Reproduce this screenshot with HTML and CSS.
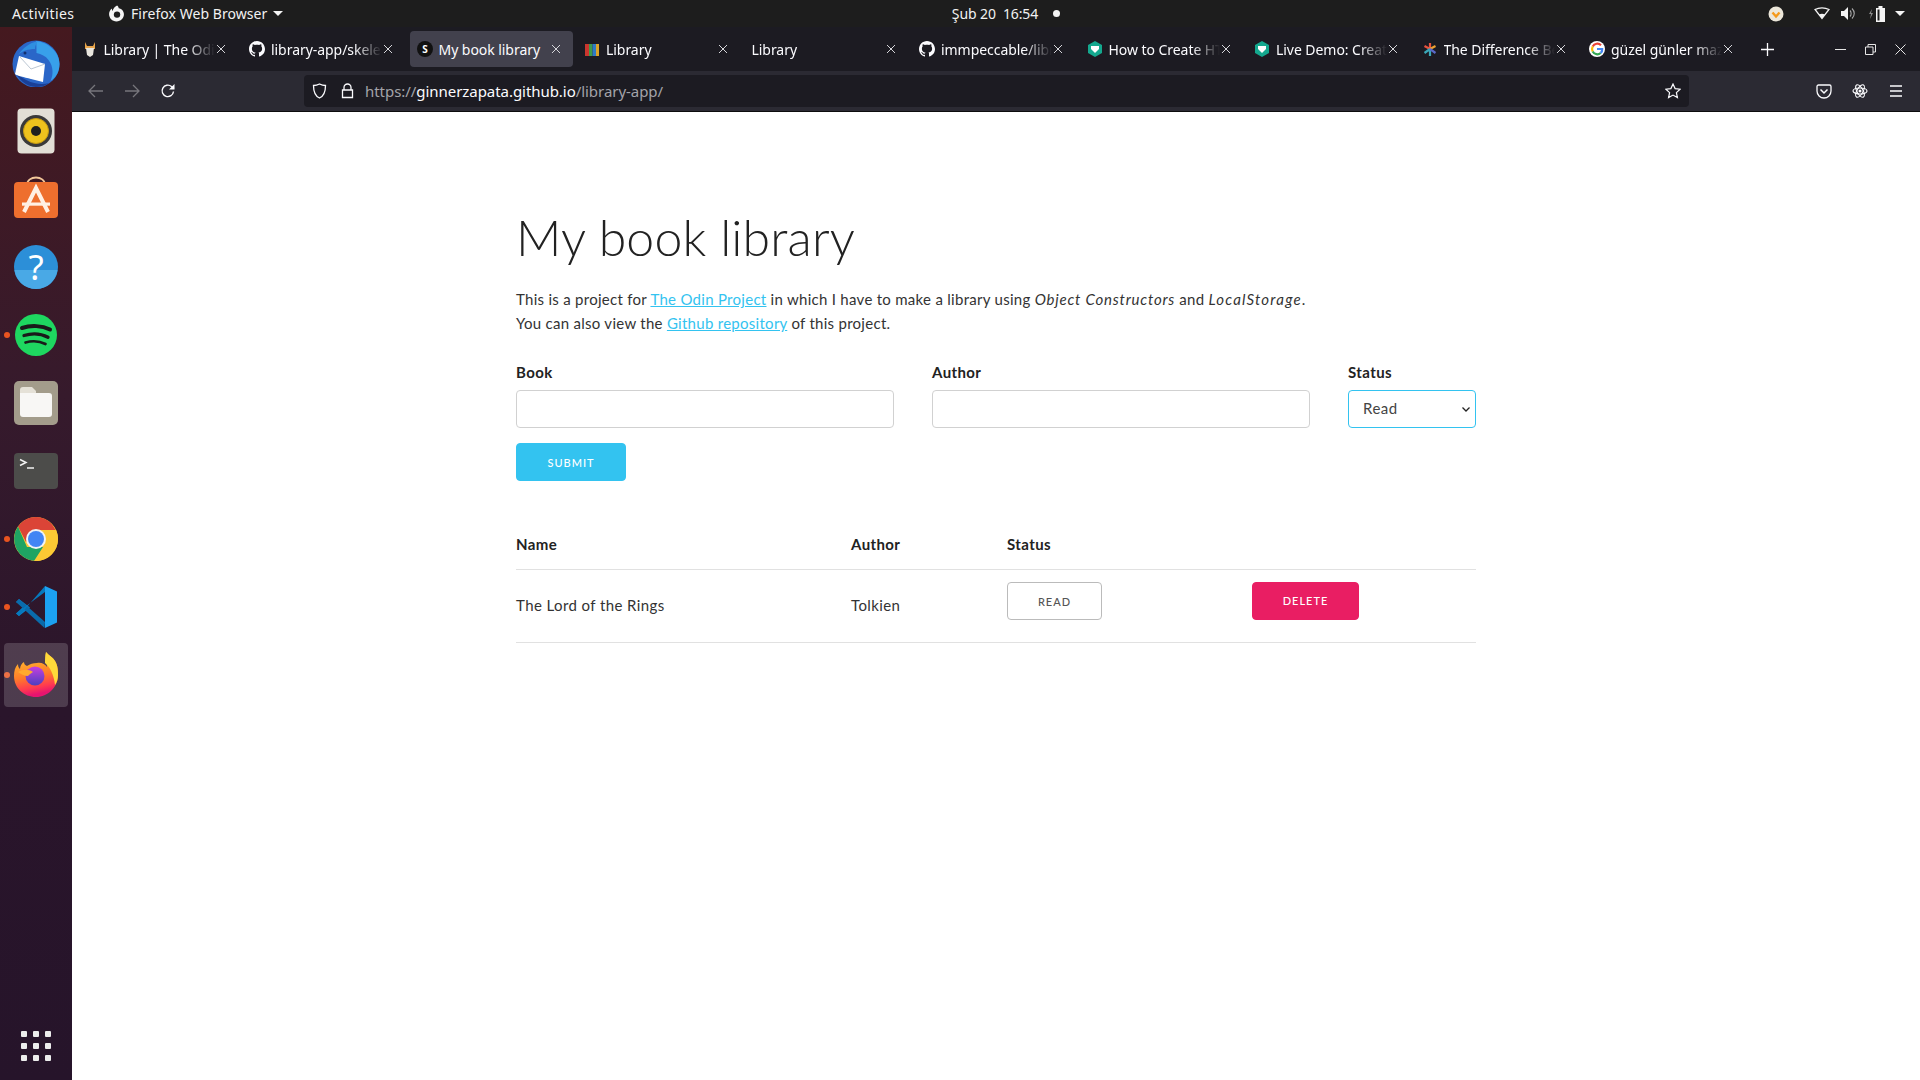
FILE: index.html
```html
<!DOCTYPE html>
<html lang="en">
<head>
<meta charset="utf-8">
<title>My book library</title>
<link rel="stylesheet" href="styles.css">
</head>
<body>
<svg class="defs" width="0" height="0" aria-hidden="true">
  <symbol id="gh" viewBox="0 0 16 16"><path fill="#fbfbfe" d="M8 0C3.600 0 0 3.600 0 8c0 3.500 2.300 6.500 5.500 7.600.4.100.5-.2.5-.4v-1.400c-2.200.5-2.700-1.100-2.700-1.100-.4-.9-.9-1.200-.9-1.200-.7-.5.100-.5.100-.5.800.100 1.200.8 1.200.8.700 1.200 1.900.9 2.300.7.100-.5.3-.9.5-1.100-1.800-.2-3.600-.9-3.600-4 0-.9.300-1.600.8-2.100-.1-.2-.4-1 .1-2.100 0 0 .7-.2 2.200.8.600-.2 1.300-.3 2-.3s1.400.1 2 .3c1.500-1 2.200-.8 2.200-.8.4 1.100.2 1.900.1 2.100.5.600.8 1.300.8 2.100 0 3.100-1.900 3.700-3.600 3.900.3.3.5.7.5 1.500v2.200c0 .2.100.5.6.4C13.700 14.500 16 11.500 16 8c0-4.400-3.600-8-8-8z"/></symbol>
  <symbol id="hex" viewBox="0 0 16 16"><path fill="#14a88e" d="M8 0l7 4v8l-7 4-7-4V4z"/><path fill="#fff" d="M4 5h8v3L8 12 4 8z"/></symbol>
  <symbol id="x" viewBox="0 0 10 10"><path stroke="#d6d6da" stroke-width="1" fill="none" d="M1 1l8 8M9 1l-8 8"/></symbol>
</svg>

<header class="topbar">
  <div class="top-left">
    <span class="top-activities">Activities</span>
    <span class="top-app">
      <svg class="top-ff" width="17" height="17" viewBox="0 0 16 16"><path fill="#f4f4f4" d="M8.500 .5c1 .7 1.500 1.500 1.600 2.500C13 3.500 15 5.800 15 8.800 15 12.500 12 15.500 8 15.500S1 12.300 1 8.500C1 6.300 2 4.300 3.800 3.200 3.600 4.200 3.800 5 4.300 5.700 4.700 3.700 6.500 1.500 8.500 .5z"/><circle cx="8.500" cy="9" r="3" fill="#1d1d1d"/></svg>
      Firefox Web Browser
      <svg class="caret" width="10" height="5" viewBox="0 0 10 5"><path fill="#f4f4f4" d="M0 0h10L5 5z"/></svg>
    </span>
  </div>
  <div class="top-center">
    <span class="top-date">Şub 20&nbsp; 16:54</span>
    <span class="top-dot"></span>
  </div>
  <div class="top-right">
    <svg class="tray-orange" width="16" height="16" viewBox="0 0 16 16"><circle cx="8" cy="8" r="7.500" fill="#ece7da"/><path d="M4.500 6.500L8 10.500l3.500-4" fill="none" stroke="#f59a1c" stroke-width="2.400"/></svg>
    <svg class="tray-wifi" width="16" height="13" viewBox="0 0 16 13"><path fill="none" stroke="#f4f4f4" stroke-width="1.300" d="M1 2.500C5 .3 11 .3 15 2.500L8 11.500z"/><path fill="#f4f4f4" d="M5 7.500c2-1 4-1 6 0L8 11.500z"/></svg>
    <svg class="tray-vol" width="15" height="13" viewBox="0 0 15 13"><path fill="#f4f4f4" d="M0 4h3l4-4v13l-4-4H0z"/><path fill="none" stroke="#a8a8a8" stroke-width="1.100" d="M9 3.500c1.500 1.500 1.500 4.500 0 6M11 1.500c3 3 3 7 0 10"/></svg>
    <svg class="tray-bat" width="18" height="16" viewBox="0 0 18 16"><path fill="#8a8a8a" d="M3 3L0 8h2l-1 5 3-6H2z"/><rect x="7.500" y="2.500" width="8" height="13" fill="#f4f4f4" stroke="#f4f4f4"/><rect x="9.500" y="0" width="4" height="2" fill="#f4f4f4"/><rect x="8.500" y="3.500" width="2" height="11" fill="#1d1d1d"/></svg>
    <svg class="caret tray-caret" width="10" height="5" viewBox="0 0 10 5"><path fill="#f4f4f4" d="M0 0h10L5 5z"/></svg>
  </div>
</header>

<div class="desktop">
  <nav class="dock">
    <div class="dock-item">
      <svg width="48" height="48" viewBox="0 0 48 48"><circle cx="24" cy="25" r="23.500" fill="#2a66c8"/><path fill="#38a0ea" d="M24 2c12 1 23.500 11 23.500 23 0 7-3 13-9 17 3-6 3-15-2-21-3-4-7-6-12-7 0-4 0-9-.5-12z"/><path fill="#1a3f96" d="M2 30c3 9 12 18 22 18 5 0 9-1 13-4-10 3-27-1-35-14z"/><path fill="#2f8fe0" d="M6 16c5-7 11-12 20-14-2 3-3 5-3 8-7 0-13 2-17 6z"/><path fill="#fff" d="M7 17l26 8-2 18-12-3C12 38 5 37 3 35z"/><path fill="none" stroke="#a9b8c6" stroke-width=".8" d="M8 18l11 12 14-5"/><circle cx="13" cy="14" r="1.500" fill="#12306e"/></svg>
    </div>
    <div class="dock-item">
      <svg width="48" height="48" viewBox="0 0 48 48"><rect x="5.500" y="1.500" width="37" height="45" rx="4" fill="#e2dfd6"/><circle cx="24" cy="24" r="16" fill="#3a3a3a"/><circle cx="24" cy="24" r="12.500" fill="#eec21d"/><circle cx="24" cy="24" r="12.500" fill="none" stroke="#c79c12" stroke-width="1"/><circle cx="24" cy="24" r="5" fill="#1f1f1f"/></svg>
    </div>
    <div class="dock-item">
      <svg width="48" height="48" viewBox="0 0 48 48"><path fill="none" stroke="#f4c89a" stroke-width="1.800" d="M15 10c0-10 18-10 18 0"/><rect x="2" y="7" width="44" height="36" rx="4" fill="#ee6f2e"/><path fill="none" stroke="#fff0e4" stroke-width="4" d="M12 37l12-24 12 24"/><rect x="10" y="27.500" width="28" height="3.200" fill="#fff0e4"/></svg>
    </div>
    <div class="dock-item">
      <svg width="48" height="48" viewBox="0 0 48 48"><circle cx="24" cy="24" r="22" fill="#2c8fd8"/><path fill="#49a9e6" d="M2.500 27h43C44 38 35 46 24 46S4 38 2.500 27z"/><text class="help-q" x="24" y="37" text-anchor="middle">?</text></svg>
    </div>
    <div class="dock-item dock-running">
      <svg width="48" height="48" viewBox="0 0 48 48"><circle cx="24" cy="24" r="21" fill="#1ed760"/><g fill="none" stroke="#1a1a1a" stroke-linecap="round"><path stroke-width="4" d="M10 17c9-3 20-2.500 28 1.500"/><path stroke-width="3.300" d="M12 24.500c8-2.500 17-2 24 1.800"/><path stroke-width="2.700" d="M13.500 31.500c7-2 14-1.500 20 1.500"/></g></svg>
    </div>
    <div class="dock-item">
      <svg width="48" height="48" viewBox="0 0 48 48"><rect x="2" y="2" width="44" height="44" rx="5" fill="#a39c8b"/><path fill="#e5e1d7" d="M8 11a3 3 0 0 1 3-3h9l4 4v6H8z"/><path fill="#f8f7f5" d="M8 14h29a3 3 0 0 1 3 3v18a3 3 0 0 1-3 3H11a3 3 0 0 1-3-3z"/></svg>
    </div>
    <div class="dock-item">
      <svg width="48" height="48" viewBox="0 0 48 48"><rect x="2" y="6" width="44" height="36" rx="4" fill="#4c4c4a"/><path fill="none" stroke="#f2f2f2" stroke-width="1.500" d="M8 12.500l6 3-6 3"/><path stroke="#f2f2f2" stroke-width="1.500" d="M15 21h7"/></svg>
    </div>
    <div class="dock-item dock-running">
      <svg width="48" height="48" viewBox="0 0 48 48"><circle cx="24" cy="24" r="22" fill="#fcc934"/><path fill="#db4437" d="M24 2a22 22 0 0 0-18 9.500L14 27l10-12h19.500C40 7 32.500 2 24 2z"/><path fill="#1fa463" d="M6 11.500A22 22 0 0 0 24 46l10.500-14H15z"/><path fill="#fcc934" d="M24 15l20 0A22 22 0 0 1 22 46l11-17z"/><circle cx="24" cy="24" r="10" fill="#f1f3f4"/><circle cx="24" cy="24" r="8" fill="#4285f4"/></svg>
    </div>
    <div class="dock-item dock-running">
      <svg width="48" height="48" viewBox="0 0 48 48"><path fill="#0a7fc4" d="M4 19l3-3 11 8.500L7 33l-3-2.500 7-6.500z"/><path fill="#0a6bab" d="M7 16l26 23-.5 6L4 19z"/><path fill="#0679bd" d="M33 3L7 33l-3-2.500L33 9z"/><path fill="#1ca1f1" d="M33 3l12 5.500v31L33 45z"/></svg>
    </div>
    <div class="dock-item dock-running dock-active">
      <svg width="48" height="48" viewBox="0 0 48 48"><defs><linearGradient id="ffa" x1="0" y1="0" x2=".2" y2="1"><stop offset="0" stop-color="#ffd22e"/><stop offset=".6" stop-color="#ff7a2a"/><stop offset=".85" stop-color="#ff3a50"/><stop offset="1" stop-color="#e6146f"/></linearGradient><linearGradient id="ffb" x1="0" y1="0" x2="0" y2="1"><stop offset="0" stop-color="#c73fe0"/><stop offset="1" stop-color="#4a3fbf"/></linearGradient></defs><path fill="url(#ffa)" d="M34 1c3 4 7 5 9 9 3 5 3 10 3 14 0 12-10 22-22 22S2 37 2 25c0-5 1-9 4-12 0 3 1 4 2 5 0-3 2-6 4-7 0 2 1 3 3 4 3-2 6-3 10-3 4-1 8 1 10 4 0-5-2-10-1-15z"/><path fill="#ffd93a" d="M34 1c3 4 7 5 9 9 3 5 3 10 3 14 0 4-1 7-3 10-1-10-5-18-10-22 0-4 0-8 1-11z"/><circle cx="23" cy="25" r="9.500" fill="url(#ffb)"/><path fill="#ffab2e" d="M6 21c5-3 11-3 15 0-2 1-4 3-5 4-4 0-7-2-10-4z"/></svg>
    </div>
    <div class="dock-apps">
      <i></i><i></i><i></i><i></i><i></i><i></i><i></i><i></i><i></i>
    </div>
  </nav>

  <div class="browser">
    <div class="tabbar">
      <div class="tab">
        <svg class="fav" width="16" height="16" viewBox="0 0 16 16"><path fill="#e8a44a" d="M3 1l2 4h6l2-4v7H3z"/><path fill="#e9e6df" d="M4 7h8l-1 7-3 2-3-2z"/></svg>
        <span class="tab-title">Library | The Odin Project</span>
        <svg class="tab-x" width="10" height="10"><use href="#x"/></svg>
      </div>
      <div class="tab">
        <svg class="fav" width="16" height="16"><use href="#gh"/></svg>
        <span class="tab-title">library-app/skeleton</span>
        <svg class="tab-x" width="10" height="10"><use href="#x"/></svg>
      </div>
      <div class="tab tab-active">
        <svg class="fav" width="16" height="16" viewBox="0 0 16 16"><circle cx="8" cy="8" r="8" fill="#111"/><text class="fav-s" x="8" y="11.500" text-anchor="middle">S</text></svg>
        <span class="tab-title">My book library</span>
        <svg class="tab-x" width="10" height="10"><use href="#x"/></svg>
      </div>
      <div class="tab">
        <svg class="fav" width="16" height="16" viewBox="0 0 16 16"><rect x="1" y="3" width="4" height="12" fill="#c9362e"/><rect x="5" y="3" width="3.500" height="12" fill="#3f9a4a"/><rect x="8.500" y="3" width="3.500" height="12" fill="#2f79c4"/><rect x="12" y="3" width="3" height="12" fill="#d9a227"/></svg>
        <span class="tab-title">Library</span>
        <svg class="tab-x" width="10" height="10"><use href="#x"/></svg>
      </div>
      <div class="tab">
        <span class="tab-title">Library</span>
        <svg class="tab-x" width="10" height="10"><use href="#x"/></svg>
      </div>
      <div class="tab">
        <svg class="fav" width="16" height="16"><use href="#gh"/></svg>
        <span class="tab-title">immpeccable/library</span>
        <svg class="tab-x" width="10" height="10"><use href="#x"/></svg>
      </div>
      <div class="tab">
        <svg class="fav" width="16" height="16"><use href="#hex"/></svg>
        <span class="tab-title">How to Create HTML</span>
        <svg class="tab-x" width="10" height="10"><use href="#x"/></svg>
      </div>
      <div class="tab">
        <svg class="fav" width="16" height="16"><use href="#hex"/></svg>
        <span class="tab-title">Live Demo: Create a</span>
        <svg class="tab-x" width="10" height="10"><use href="#x"/></svg>
      </div>
      <div class="tab">
        <svg class="fav" width="16" height="16" viewBox="0 0 16 16"><g fill="none" stroke-width="2.200"><path stroke="#e8533f" d="M8 2v6M2.500 5L8 8"/><path stroke="#f0a030" d="M13.500 5L8 8"/><path stroke="#3aa7b8" d="M2.500 12L8 8M8 15V8"/><path stroke="#5a6ac8" d="M13.500 12L8 8"/></g></svg>
        <span class="tab-title">The Difference Between</span>
        <svg class="tab-x" width="10" height="10"><use href="#x"/></svg>
      </div>
      <div class="tab">
        <svg class="fav" width="16" height="16" viewBox="0 0 16 16"><circle cx="8" cy="8" r="8" fill="#fff"/><path fill="none" stroke="#ea4335" stroke-width="2.200" d="M12 4.200A5.200 5.200 0 0 0 3.700 5.500"/><path fill="none" stroke="#fbbc05" stroke-width="2.200" d="M3.700 5.500a5.200 5.200 0 0 0 0 5"/><path fill="none" stroke="#34a853" stroke-width="2.200" d="M3.700 10.500a5.200 5.200 0 0 0 8 1.500"/><path fill="none" stroke="#4285f4" stroke-width="2.200" d="M11.700 12a5.200 5.200 0 0 0 1.500-4H8"/></svg>
        <span class="tab-title">güzel günler mazide</span>
        <svg class="tab-x" width="10" height="10"><use href="#x"/></svg>
      </div>
      <svg class="newtab" width="13" height="13" viewBox="0 0 13 13"><path stroke="#fbfbfe" stroke-width="1.300" d="M6.500 0v13M0 6.500h13"/></svg>
      <div class="winbtns">
        <svg width="11" height="11" viewBox="0 0 11 11"><path stroke="#e6e6e6" d="M0 5.500h11"/></svg>
        <svg width="11" height="11" viewBox="0 0 11 11"><path fill="none" stroke="#e6e6e6" d="M.5 3h7.500v7.500H.5zM3 3V.5h7.500V8H8"/></svg>
        <svg width="11" height="11" viewBox="0 0 11 11"><path stroke="#e6e6e6" d="M.5.500l10 10M10.500.500l-10 10"/></svg>
      </div>
    </div>

    <div class="toolbar">
      <svg class="tb-back" width="16" height="14" viewBox="0 0 16 14"><path fill="none" stroke="#77767c" stroke-width="1.300" d="M7 1L1 7l6 6M1 7h14"/></svg>
      <svg class="tb-fwd" width="16" height="14" viewBox="0 0 16 14"><path fill="none" stroke="#77767c" stroke-width="1.300" d="M9 1l6 6-6 6M15 7H1"/></svg>
      <svg class="tb-reload" width="16" height="16" viewBox="0 0 16 16"><path fill="none" stroke="#fbfbfe" stroke-width="1.400" d="M13.500 8.500a5.700 5.700 0 1 1-2-5l2.500 2"/><path fill="#fbfbfe" d="M14.500 1v5.500H9z"/></svg>
      <div class="urlbar">
        <svg class="ub-shield" width="15" height="16" viewBox="0 0 15 16"><path fill="none" stroke="#fbfbfe" stroke-width="1.300" d="M7.500 1c2 1 4 1.500 6 1.500 0 6-1.500 10.500-6 12.500C3 13 1.500 8.500 1.500 2.500c2 0 4-.5 6-1.500z"/></svg>
        <svg class="ub-lock" width="13" height="16" viewBox="0 0 13 16"><path fill="none" stroke="#fbfbfe" stroke-width="1.300" d="M3 7V4.500a3.500 3.500 0 0 1 7 0V7M1.500 7h10v7.500h-10z"/></svg>
        <span class="url"><span class="url-dim">https://</span>ginnerzapata.github.io<span class="url-dim">/library-app/</span></span>
        <svg class="ub-star" width="16" height="16" viewBox="0 0 16 16"><path fill="none" stroke="#fbfbfe" stroke-width="1.200" d="M8 1l2.100 4.600 5 .6-3.700 3.400 1 5L8 12.100l-4.400 2.500 1-5L.9 6.200l5-.6z"/></svg>
      </div>
      <svg class="tb-pocket" width="16" height="15" viewBox="0 0 16 15"><path fill="none" stroke="#fbfbfe" stroke-width="1.300" d="M2.500 1h11A1.500 1.500 0 0 1 15 2.500V7a7 7 0 0 1-14 0V2.500A1.500 1.500 0 0 1 2.500 1z"/><path fill="none" stroke="#fbfbfe" stroke-width="1.500" d="M4.500 5.500L8 9l3.500-3.500"/></svg>
      <svg class="tb-ext" width="16" height="16" viewBox="0 0 16 16"><g fill="none" stroke="#fbfbfe" stroke-width="1.200"><ellipse cx="8" cy="8" rx="7" ry="3"/><ellipse cx="8" cy="8" rx="7" ry="3" transform="rotate(60 8 8)"/><ellipse cx="8" cy="8" rx="7" ry="3" transform="rotate(120 8 8)"/></g><circle cx="8" cy="8" r="1.500" fill="#fbfbfe"/></svg>
      <svg class="tb-menu" width="14" height="12" viewBox="0 0 14 12"><path stroke="#fbfbfe" stroke-width="1.300" d="M1 1h12M1 6h12M1 11h12"/></svg>
    </div>

    <main class="page">
      <div class="container">
        <h1 class="title">My book library</h1>
        <p class="intro">This is a project for <a href="#">The Odin Project</a> in which I have to make a library using <em>Object Constructors</em> and <em>LocalStorage</em>.<br>You can also view the <a href="#">Github repository</a> of this project.</p>
        <form class="book-form">
          <div class="field">
            <label class="field-label" for="book">Book</label>
            <input class="field-input" id="book" type="text">
          </div>
          <div class="field">
            <label class="field-label" for="author">Author</label>
            <input class="field-input" id="author" type="text">
          </div>
          <div class="field">
            <label class="field-label" for="status">Status</label>
            <select class="field-input field-select" id="status"><option>Read</option><option>Not read</option></select>
          </div>
          <button class="btn btn-submit" type="button">Submit</button>
        </form>
        <table class="books">
          <thead>
            <tr><th class="col-name">Name</th><th class="col-author">Author</th><th class="col-status">Status</th><th></th></tr>
          </thead>
          <tbody>
            <tr>
              <td>The Lord of the Rings</td>
              <td>Tolkien</td>
              <td><button class="btn btn-read" type="button">Read</button></td>
              <td><button class="btn btn-delete" type="button">Delete</button></td>
            </tr>
          </tbody>
        </table>
      </div>
    </main>
  </div>
</div>
</body>
</html>
```

FILE: styles.css
```css
* { box-sizing: border-box; }
html, body { height: 100%; }
body {
  margin: 0;
  height: 1080px;
  overflow: hidden;
  display: flex;
  flex-direction: column;
  background: #fff;
  font-family: "Noto Sans", sans-serif;
}
.defs { position: absolute; }

/* GNOME top bar */
.topbar {
  height: 27px;
  flex: none;
  background: #1d1d1d;
  color: #f2f2f2;
  font-size: 14px;
  display: grid;
  grid-template-columns: 1fr auto 1fr;
  align-items: center;
}
.top-left { display: flex; align-items: center; padding-left: 12px; }
.top-activities { width: 96px; letter-spacing: .4px; }
.top-app { display: flex; align-items: center; gap: 6px; letter-spacing: .05px; }
.top-center { display: flex; align-items: center; gap: 15px; margin-left: 92px; }
.top-date { letter-spacing: -.1px; }
.top-dot { width: 7px; height: 7px; border-radius: 50%; background: #f4f4f4; }
.top-right { display: flex; align-items: center; justify-content: flex-end; padding-right: 15px; }
.tray-orange { margin-right: 30px; }
.tray-wifi { margin-right: 11px; }
.tray-vol { margin-right: 13px; }
.tray-bat { margin-right: 8px; }

.desktop { flex: 1; display: flex; min-height: 0; }

/* Dock */
.dock {
  width: 72px;
  flex: none;
  display: flex;
  flex-direction: column;
  padding-top: 2px;
  background: linear-gradient(180deg, #45191f 0%, #361a2c 35%, #2a152b 65%, #26142a 100%);
}
.dock-item {
  height: 68px;
  flex: none;
  display: flex;
  align-items: center;
  justify-content: center;
  position: relative;
}
.dock-running::before {
  content: "";
  position: absolute;
  left: 4px;
  top: 31px;
  width: 6px;
  height: 6px;
  border-radius: 50%;
  background: #e95420;
}
.dock-active::after {
  content: "";
  position: absolute;
  inset: 2px 4px;
  border-radius: 4px;
  background: rgba(255, 255, 255, .17);
}
.dock-active svg { position: relative; z-index: 1; }
.help-q { font: 400 35px "Noto Sans", sans-serif; fill: #fff; }
.dock-apps {
  margin-top: auto;
  margin-bottom: 19px;
  align-self: center;
  display: grid;
  grid-template-columns: repeat(3, 6px);
  grid-auto-rows: 6px;
  gap: 6px;
}
.dock-apps i { background: #ececec; border-radius: 1px; }

/* Browser chrome */
.browser { flex: 1; min-width: 0; display: flex; flex-direction: column; }
.tabbar {
  height: 44px;
  flex: none;
  background: #1c1b22;
  display: flex;
  align-items: center;
  padding-left: 2.500px;
  gap: 4.500px;
  color: #fbfbfe;
  font-size: 14px;
}
.tab {
  width: 163px;
  height: 36px;
  flex: none;
  display: flex;
  align-items: center;
  padding: 0 12px 0 7px;
  border-radius: 4px;
}
.tab-active { background: #42414d; }
.fav { flex: none; margin-right: 6px; }
.fav-s { font: 700 10px "Noto Sans", sans-serif; fill: #fff; }
.tab-title {
  flex: 1;
  min-width: 0;
  white-space: nowrap;
  overflow: hidden;
  -webkit-mask-image: linear-gradient(90deg, #000 75%, transparent 100%);
  mask-image: linear-gradient(90deg, #000 75%, transparent 100%);
  letter-spacing: -.05px;
}
.tab-active .tab-title { -webkit-mask-image: none; mask-image: none; }
.tab-x { flex: none; margin-left: 1px; }
.newtab { flex: none; margin-left: 11px; }
.winbtns { margin-left: auto; display: flex; gap: 19px; padding-right: 14px; align-items: center; }

.toolbar {
  height: 41px;
  flex: none;
  background: #2b2a33;
  border-bottom: 1px solid #0c0c0d;
  display: flex;
  align-items: center;
  padding-left: 16px;
  color: #fbfbfe;
}
.tb-back, .tb-fwd { flex: none; }
.tb-fwd { margin-left: 20px; }
.tb-reload { flex: none; margin-left: 20px; }
.urlbar {
  width: 1385px;
  height: 32px;
  flex: none;
  margin-left: 128px;
  background: #1c1b22;
  border-radius: 4px;
  display: flex;
  align-items: center;
  padding: 0 8px;
  font-size: 15px;
}
.ub-shield { flex: none; }
.ub-lock { flex: none; margin-left: 14px; }
.url { flex: 1; margin-left: 11px; letter-spacing: -.05px; }
.url-dim { color: #a3a3a9; }
.ub-star { flex: none; }
.tb-pocket { flex: none; margin-left: 127px; }
.tb-ext { flex: none; margin-left: 20px; }
.tb-menu { flex: none; margin-left: 21px; }

/* Page */
.page { flex: 1; background: #fff; overflow: hidden; font-family: Lato, sans-serif; color: #333; }
.container { width: 960px; margin: 0 auto; padding-top: 95px; font-size: 15px; line-height: 24px; }
.title {
  margin: 0 0 20px;
  font-size: 50px;
  line-height: 60px;
  font-weight: 300;
  letter-spacing: .15px;
  color: #222;
}
.intro { margin: 0 0 25px; letter-spacing: .28px; }
.intro a { color: #33c3f0; }
.intro em { letter-spacing: .8px; }
.intro em + em { letter-spacing: 1.200px; }
.book-form {
  display: grid;
  grid-template-columns: 378px 378px 128px;
  column-gap: 38px;
  justify-content: space-between;
}
.field { display: flex; flex-direction: column; }
.field-label { font-weight: 700; margin-bottom: 6px; letter-spacing: .4px; color: #222; }
.field-input {
  height: 38px;
  margin: 0 0 15px;
  padding: 6px 10px;
  border: 1px solid #d1d1d1;
  border-radius: 4px;
  background: #fff;
  font: inherit;
  color: #444;
}
.field-select {
  appearance: none;
  -webkit-appearance: none;
  border-color: #33c3f0;
  padding: 4px 10px 6px 14px;
  letter-spacing: .5px;
  background: #fff url("data:image/svg+xml,%3Csvg xmlns='http://www.w3.org/2000/svg' width='8' height='5'%3E%3Cpath d='M.5.5L4 4l3.500-3.500' fill='none' stroke='%23222' stroke-width='1.300'/%3E%3C/svg%3E") no-repeat right 5px center;
}
.btn {
  display: block;
  height: 38px;
  padding: 0;
  border: 1px solid #bbb;
  border-radius: 4px;
  background: transparent;
  font: 500 11px/36px Lato, sans-serif;
  letter-spacing: 1px;
  text-transform: uppercase;
  text-align: center;
  color: #555;
}
.btn-submit {
  grid-column: 1;
  width: 110px;
  padding-top: 1px;
  background: #33c3f0;
  border-color: #33c3f0;
  color: #fff;
}
.btn-read { width: 95px; padding-top: 1px; margin: 1px 0 9px; }
.btn-delete {
  width: 107px;
  margin: 1px 0 9px;
  background: #e91e63;
  border-color: #e91e63;
  color: #fff;
}
.books {
  width: 100%;
  margin-top: 40px;
  border-collapse: collapse;
  table-layout: fixed;
}
.books th, .books td {
  padding: 11px 0 13px;
  text-align: left;
  border-bottom: 1px solid #e1e1e1;
  letter-spacing: .4px;
}
.books th { font-weight: 700; color: #222; }
.col-name { width: 335px; }
.col-author { width: 156px; }
.col-status { width: 245px; }
```
